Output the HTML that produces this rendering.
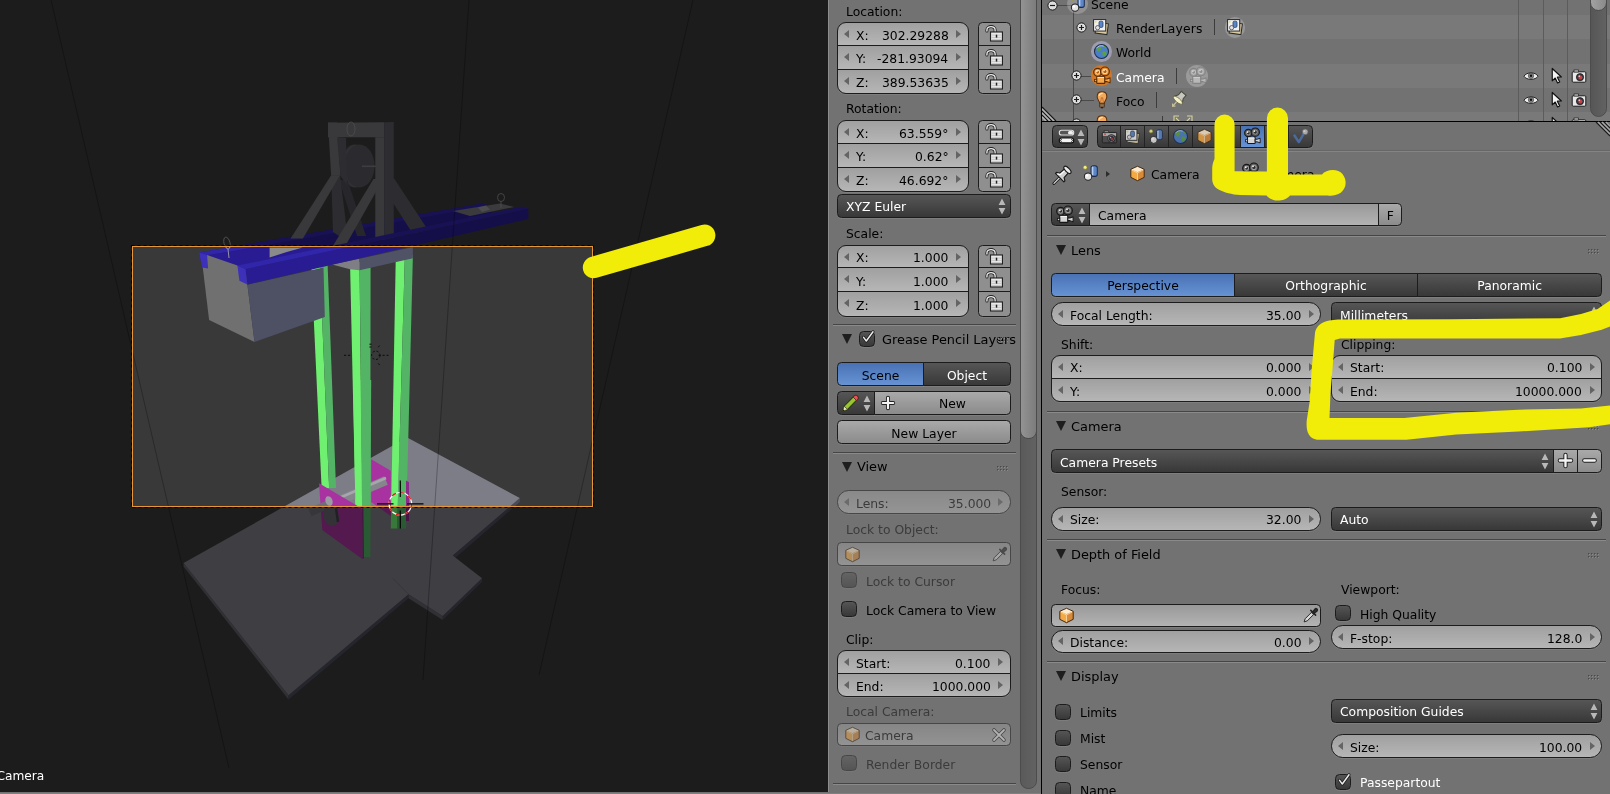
<!DOCTYPE html>
<html lang="en"><head><meta charset="utf-8"><title>Blender</title>
<style>
*{box-sizing:border-box;margin:0;padding:0}
html,body{width:1610px;height:794px;overflow:hidden;background:#727272}
body{position:relative;font-family:"DejaVu Sans","Liberation Sans",sans-serif;font-size:12.35px;color:#000;line-height:1}
.abs{position:absolute}
.t{will-change:transform;position:absolute;white-space:nowrap;line-height:14px;height:14px}
.h{font-size:12.9px}
.w{position:absolute;border:1px solid #1c1c1c;box-shadow:0 1px 0 rgba(255,255,255,.09)}
.num{background:linear-gradient(#a0a0a0,#b6b6b6)}
.tool{background:linear-gradient(#a9a9a9,#8b8b8b)}
.txt{background:linear-gradient(#999,#b3b3b3)}
.dk{background:linear-gradient(#565656,#383838);color:#fff}
.sel{background:linear-gradient(#4872b4,#6792d3);color:#000}
.tog{background:#8f8f8f}
.dis{opacity:.5}
.cb{position:absolute;width:16px;height:16px;border:1px solid #1c1c1c;border-radius:4.5px;background:linear-gradient(#555,#383838);box-shadow:0 1px 0 rgba(255,255,255,.08)}
.al{position:absolute;width:0;height:0;border-top:4px solid transparent;border-bottom:4px solid transparent;border-right:5px solid #646464}
.ar{position:absolute;width:0;height:0;border-top:4px solid transparent;border-bottom:4px solid transparent;border-left:5px solid #646464}
.sep{position:absolute;height:2px;border-top:1px solid #454545;border-bottom:1px solid #8a8a8a}
.tri{position:absolute;width:0;height:0;border-left:5.5px solid transparent;border-right:5.5px solid transparent;border-top:10px solid #1e1e1e}
.c{text-align:center}
.r{text-align:right}
svg{position:absolute;overflow:visible}
</style></head>
<body>
<div class="abs" style="left:0;top:0;width:828px;height:792px;background:#393939;overflow:hidden">
<svg width="828" height="792" viewBox="0 0 828 792" style="left:0;top:0" shape-rendering="geometricPrecision">
<polygon points="183.6,563.1 288.5,695.3 288.5,699.6 183.6,566.5" fill="#60606a" />
<polygon points="288.5,695.3 408.5,594.3 408.5,598.3 288.5,699.6" fill="#4b4b5c" />
<polygon points="408.5,594.3 442.7,616.1 442.7,620.1 408.5,598.3" fill="#60606a" />
<polygon points="442.7,616.1 482.0,578.3 482.0,582.0 442.7,620.1" fill="#4b4b5c" />
<polygon points="452.7,555.6 519.8,498.1 519.8,502.0 455.0,558.0" fill="#4b4b5c" />
<polygon points="407.2,437.4 519.8,498.1 452.7,555.6 482.0,578.3 442.7,616.1 408.5,594.3 288.5,695.3 183.6,563.1" fill="#7d7d87" />
<path d="M392.8 578.3 L408.5 594.3" stroke="#6a6a74" stroke-width="1" fill="none"/>
<polygon points="311.1,262.0 319.8,262.0 329.1,488.0 321.6,488.0" fill="#70f070" />
<polygon points="319.8,262.0 327.5,262.0 336.0,488.0 329.1,488.0" fill="#54b466" />
<polygon points="350.0,262.0 359.5,262.0 362.2,512.0 355.6,512.0" fill="#70f070" />
<polygon points="359.5,262.0 370.6,262.0 370.2,557.0 363.0,557.0" fill="#54b466" />
<polygon points="395.8,255.0 404.9,255.0 397.1,528.6 390.8,528.6" fill="#70f070" />
<polygon points="404.9,255.0 412.9,255.0 406.0,528.6 397.1,528.6" fill="#54b466" />
<polygon points="371.2,459.3 390.8,470.7 390.8,516.0 371.2,502.0" fill="#a8329f" />
<polygon points="406.0,480.5 409.0,482.3 409.0,521.0 406.0,521.0" fill="#8c2a8a" />
<path d="M338 501 L386 480.5" stroke="#85858c" stroke-width="9" stroke-linecap="butt"/>
<path d="M338 498.5 L386 478" stroke="#a6a6ac" stroke-width="2.5"/>
<polygon points="353.0,380.0 360.6,380.0 362.2,512.0 355.6,512.0" fill="#70f070" />
<polygon points="360.6,380.0 371.2,380.0 370.2,557.0 362.6,557.0" fill="#54b466" />
<polygon points="319.0,483.3 361.9,508.5 362.6,559.3 322.3,529.9" fill="#a8329f" />
<polygon points="361.9,508.5 363.4,508.0 364.0,558.0 362.6,559.3" fill="#8c2a8a" />
<path d="M310 512.5 L330 503.5" stroke="#6f6f77" stroke-width="8"/>
<ellipse cx="331" cy="516" rx="7.5" ry="10" fill="#66666e" transform="rotate(-20 331 516)"/>
<ellipse cx="329" cy="501" rx="3.5" ry="5" fill="#9b9ba3" transform="rotate(-20 329 501)"/>
<path d="M336 508 L338 522" stroke="#40404a" stroke-width="2.5"/>
<polygon points="332.0,264.5 359.5,258.8 359.5,270.3 350.0,269.3" fill="#7e7e84" />
<polygon points="359.5,258.8 412.9,247.0 412.9,258.2 359.5,270.3" fill="#505266" />
<polygon points="199.1,252.5 482.0,203.5 492.0,206.0 492.0,216.0 208.1,268.6 202.1,267.6" fill="#291c92" />
<polygon points="199.1,252.5 482.0,203.5 490.0,205.5 207.1,255.5" fill="#3125aa" />
<polygon points="207.1,254.9 237.4,265.6 245.4,269.4 345.0,248.5 345.0,236.0" fill="#291c92" />
<polygon points="453.0,211.0 500.0,203.5 514.0,207.0 470.0,216.0" fill="#77777c" />
<polygon points="478.0,207.5 486.0,205.5 490.0,209.5 482.0,212.0" fill="#9a9aa0" />
<polygon points="269.6,247.4 302.8,247.4 286.7,252.0 269.6,257.5" fill="#8a8a8a" />
<polygon points="202.1,262.0 207.1,254.9 237.4,265.6 247.4,284.7 254.5,342.1 209.1,320.0" fill="#707070" />
<polygon points="247.4,284.7 323.5,267.6 324.8,317.0 254.5,342.1" fill="#4e5064" />
<polygon points="199.1,252.5 207.1,254.9 208.1,268.6 202.1,267.6" fill="#3d31ba" />
<ellipse cx="353.5" cy="166" rx="13" ry="21.5" fill="#4a4a52"/>
<ellipse cx="355.5" cy="166" rx="13.5" ry="21.5" fill="#62626a"/>
<ellipse cx="359.5" cy="166" rx="15" ry="21.5" fill="#55555e"/>
<path d="M362 166.3 H376" stroke="#7c7c84" stroke-width="1.6"/>
<polygon points="339.0,180.0 347.5,180.0 366.0,236.0 357.0,236.0" fill="#4c4c56" />
<polygon points="393.8,178.0 428.0,230.0 413.0,234.0 386.0,192.0" fill="#585862" />
<polygon points="328.0,122.5 337.0,122.5 340.5,176.0 331.2,176.0" fill="#727277" />
<polygon points="331.2,175.0 340.0,175.0 347.0,232.0 339.0,236.0 333.0,232.0" fill="#585862" />
<polygon points="337.0,137.3 346.0,138.0 347.0,185.0 340.5,176.0" fill="#585862" />
<polygon points="328.0,122.7 384.2,122.2 384.2,137.3 328.0,137.3" fill="#727277" />
<polygon points="375.3,137.3 384.2,137.3 384.2,240.0 375.3,240.0" fill="#727277" />
<polygon points="384.2,122.2 393.8,122.0 393.8,240.0 384.2,240.0" fill="#585862" />
<polygon points="331.2,175.3 340.0,175.3 302.9,238.5 290.6,238.5" fill="#727277" />
<polygon points="373.5,179.1 383.2,179.1 345.3,246.0 332.9,246.0" fill="#727277" />
<ellipse cx="351" cy="129" rx="4" ry="7" fill="none" stroke="#9a9aa2" stroke-width="0.8"/>
<polygon points="237.4,265.6 522.0,206.5 528.4,208.8 245.4,269.2" fill="#3125aa" />
<polygon points="245.4,269.2 528.4,208.8 528.4,219.0 247.4,284.5" fill="#291c92" />
<polygon points="237.4,265.6 245.4,269.2 247.4,284.5 239.4,280.7" fill="#3d31ba" />
<ellipse cx="227" cy="243" rx="3" ry="6" fill="none" stroke="#b0b0b0" stroke-width="0.8" transform="rotate(-15 227 243)"/>
<path d="M228 249 L229 258" stroke="#b0b0b0" stroke-width="0.8"/>
<ellipse cx="501" cy="197.5" rx="3.5" ry="4" fill="none" stroke="#9a9aa2" stroke-width="0.8"/>
<path d="M501 201.5 V208" stroke="#9a9aa2" stroke-width="0.8"/>
<path fill-rule="evenodd" fill="#000" fill-opacity="0.5" d="M0 0H828V792H0Z M132 246H593V507H132Z"/>
<g opacity="0.28" stroke="#000" stroke-width="1" fill="none">
<path d="M51 0 L229 768"/><path d="M469 0 L423 680"/><path d="M693 0 L539 675"/>
</g>
<rect x="131.5" y="245.5" width="462" height="262" fill="none" stroke="#000" stroke-width="1" stroke-dasharray="3 3"/>
<rect x="132.5" y="246.5" width="460" height="260" fill="none" stroke="#e8963a" stroke-width="1"/>
<g stroke="#0c0c0c" stroke-width="1" fill="none" stroke-dasharray="2.2 1.8"><path d="M344 355.3 H352 M378.5 355.3 H388.5"/><circle cx="375.8" cy="355.3" r="4.2"/><path d="M378.2 347.2 L380.6 344.6 M378.2 363.4 L380.6 366 M371.5 344.2 H369.4 M371.5 347 H369.4"/></g>
<circle cx="400.3" cy="503.8" r="11.3" fill="none" stroke="#fff" stroke-width="1.2"/>
<circle cx="400.3" cy="503.8" r="11.3" fill="none" stroke="#e01010" stroke-width="1.2" stroke-dasharray="4.4 4.4"/>
<path d="M377 503.8 H393.5 M407 503.8 H423.5 M400.3 480.5 V497 M400.3 510.5 V528.5" stroke="#000" stroke-width="1.2"/>
<text x="-3.5" y="780" fill="#fff" style="will-change:transform" font-size="12.2" font-family="DejaVu Sans, Liberation Sans, sans-serif">Camera</text>
</svg></div>
<div class="abs" style="left:0;top:792px;width:1041px;height:2px;background:linear-gradient(#6c6c6c,#848484)"></div>
<div class="abs" style="left:828px;top:0;width:213px;height:792px;background:#727272;border-left:1px solid #8c8c8c"></div>
<div class="abs" style="left:1020px;top:-8px;width:17px;height:797px;border:1px solid #4c4c4c;border-radius:8px;background:linear-gradient(90deg,#5a5a5a,#626262)"></div>
<div class="abs" style="left:1020px;top:-8px;width:17px;height:447px;border:1px solid #4c4c4c;border-radius:8px;background:linear-gradient(90deg,#939393,#7c7c7c)"></div>
<div class="abs" style="left:1041px;top:0;width:1px;height:794px;background:#000"></div>
<div class="t " style="left:845.9px;top:5px;">Location:</div>
<div class="w num " style="left:836.7px;top:21.9px;width:131.9px;height:23.9px;border-radius:9px 9px 0 0;"><i class="al" style="left:6.6px;top:7.0px"></i><i class="ar" style="right:6.6px;top:7.0px"></i></div><div class="t " style="left:856.2px;top:29px;">X:</div><div class="t r" style="right:661.4px;top:29px;">302.29288</div><div class="w tog" style="left:978.0px;top:21.9px;width:32.6px;height:23.9px;border-radius:4.5px 4.5px 0 0;"><svg width="18" height="18" viewBox="0 0 16 16" style="left:6.0px;top:2.6px;opacity:1"><path d="M1.7 5.4 V4.4 C1.7 0.4 9 0.4 9 4.4 V7" fill="none" stroke="#222" stroke-width="2.7" stroke-linecap="round"/><path d="M1.7 5.4 V4.4 C1.7 0.4 9 0.4 9 4.4 V7" fill="none" stroke="#ececec" stroke-width="1.2" stroke-linecap="round"/><rect x="4.9" y="6.2" width="10.6" height="8" fill="#e9e9e9" stroke="#222" stroke-width="1"/><path d="M5.6 9 H14.8 M5.6 11 H14.8 M5.6 12.8 H14.8" stroke="#bdbdbd" stroke-width=".7"/><rect x="9.6" y="8.6" width="1.3" height="2.6" fill="#222"/></svg></div><div class="w num " style="left:836.7px;top:44.8px;width:131.9px;height:25.0px;border-radius:0;"><i class="al" style="left:6.6px;top:7.0px"></i><i class="ar" style="right:6.6px;top:7.0px"></i></div><div class="t " style="left:856.2px;top:52px;">Y:</div><div class="t r" style="right:661.4px;top:52px;">-281.93094</div><div class="w tog" style="left:978.0px;top:44.8px;width:32.6px;height:25.0px;border-radius:0;"><svg width="18" height="18" viewBox="0 0 16 16" style="left:6.0px;top:3.0px;opacity:1"><path d="M1.7 5.4 V4.4 C1.7 0.4 9 0.4 9 4.4 V7" fill="none" stroke="#222" stroke-width="2.7" stroke-linecap="round"/><path d="M1.7 5.4 V4.4 C1.7 0.4 9 0.4 9 4.4 V7" fill="none" stroke="#ececec" stroke-width="1.2" stroke-linecap="round"/><rect x="4.9" y="6.2" width="10.6" height="8" fill="#e9e9e9" stroke="#222" stroke-width="1"/><path d="M5.6 9 H14.8 M5.6 11 H14.8 M5.6 12.8 H14.8" stroke="#bdbdbd" stroke-width=".7"/><rect x="9.6" y="8.6" width="1.3" height="2.6" fill="#222"/></svg></div><div class="w num " style="left:836.7px;top:68.8px;width:131.9px;height:25.2px;border-radius:0 0 9px 9px;"><i class="al" style="left:6.6px;top:7.0px"></i><i class="ar" style="right:6.6px;top:7.0px"></i></div><div class="t " style="left:856.2px;top:76px;">Z:</div><div class="t r" style="right:661.4px;top:76px;">389.53635</div><div class="w tog" style="left:978.0px;top:68.8px;width:32.6px;height:25.2px;border-radius:0 0 4.5px 4.5px;"><svg width="18" height="18" viewBox="0 0 16 16" style="left:6.0px;top:3.0px;opacity:1"><path d="M1.7 5.4 V4.4 C1.7 0.4 9 0.4 9 4.4 V7" fill="none" stroke="#222" stroke-width="2.7" stroke-linecap="round"/><path d="M1.7 5.4 V4.4 C1.7 0.4 9 0.4 9 4.4 V7" fill="none" stroke="#ececec" stroke-width="1.2" stroke-linecap="round"/><rect x="4.9" y="6.2" width="10.6" height="8" fill="#e9e9e9" stroke="#222" stroke-width="1"/><path d="M5.6 9 H14.8 M5.6 11 H14.8 M5.6 12.8 H14.8" stroke="#bdbdbd" stroke-width=".7"/><rect x="9.6" y="8.6" width="1.3" height="2.6" fill="#222"/></svg></div>
<div class="t " style="left:845.9px;top:102px;">Rotation:</div>
<div class="w num " style="left:836.7px;top:119.9px;width:131.9px;height:23.9px;border-radius:9px 9px 0 0;"><i class="al" style="left:6.6px;top:7.0px"></i><i class="ar" style="right:6.6px;top:7.0px"></i></div><div class="t " style="left:856.2px;top:127px;">X:</div><div class="t r" style="right:661.4px;top:127px;">63.559°</div><div class="w tog" style="left:978.0px;top:119.9px;width:32.6px;height:23.9px;border-radius:4.5px 4.5px 0 0;"><svg width="18" height="18" viewBox="0 0 16 16" style="left:6.0px;top:2.6px;opacity:1"><path d="M1.7 5.4 V4.4 C1.7 0.4 9 0.4 9 4.4 V7" fill="none" stroke="#222" stroke-width="2.7" stroke-linecap="round"/><path d="M1.7 5.4 V4.4 C1.7 0.4 9 0.4 9 4.4 V7" fill="none" stroke="#ececec" stroke-width="1.2" stroke-linecap="round"/><rect x="4.9" y="6.2" width="10.6" height="8" fill="#e9e9e9" stroke="#222" stroke-width="1"/><path d="M5.6 9 H14.8 M5.6 11 H14.8 M5.6 12.8 H14.8" stroke="#bdbdbd" stroke-width=".7"/><rect x="9.6" y="8.6" width="1.3" height="2.6" fill="#222"/></svg></div><div class="w num " style="left:836.7px;top:142.8px;width:131.9px;height:25.0px;border-radius:0;"><i class="al" style="left:6.6px;top:7.0px"></i><i class="ar" style="right:6.6px;top:7.0px"></i></div><div class="t " style="left:856.2px;top:150px;">Y:</div><div class="t r" style="right:661.4px;top:150px;">0.62°</div><div class="w tog" style="left:978.0px;top:142.8px;width:32.6px;height:25.0px;border-radius:0;"><svg width="18" height="18" viewBox="0 0 16 16" style="left:6.0px;top:3.0px;opacity:1"><path d="M1.7 5.4 V4.4 C1.7 0.4 9 0.4 9 4.4 V7" fill="none" stroke="#222" stroke-width="2.7" stroke-linecap="round"/><path d="M1.7 5.4 V4.4 C1.7 0.4 9 0.4 9 4.4 V7" fill="none" stroke="#ececec" stroke-width="1.2" stroke-linecap="round"/><rect x="4.9" y="6.2" width="10.6" height="8" fill="#e9e9e9" stroke="#222" stroke-width="1"/><path d="M5.6 9 H14.8 M5.6 11 H14.8 M5.6 12.8 H14.8" stroke="#bdbdbd" stroke-width=".7"/><rect x="9.6" y="8.6" width="1.3" height="2.6" fill="#222"/></svg></div><div class="w num " style="left:836.7px;top:166.8px;width:131.9px;height:25.2px;border-radius:0 0 9px 9px;"><i class="al" style="left:6.6px;top:7.0px"></i><i class="ar" style="right:6.6px;top:7.0px"></i></div><div class="t " style="left:856.2px;top:174px;">Z:</div><div class="t r" style="right:661.4px;top:174px;">46.692°</div><div class="w tog" style="left:978.0px;top:166.8px;width:32.6px;height:25.2px;border-radius:0 0 4.5px 4.5px;"><svg width="18" height="18" viewBox="0 0 16 16" style="left:6.0px;top:3.0px;opacity:1"><path d="M1.7 5.4 V4.4 C1.7 0.4 9 0.4 9 4.4 V7" fill="none" stroke="#222" stroke-width="2.7" stroke-linecap="round"/><path d="M1.7 5.4 V4.4 C1.7 0.4 9 0.4 9 4.4 V7" fill="none" stroke="#ececec" stroke-width="1.2" stroke-linecap="round"/><rect x="4.9" y="6.2" width="10.6" height="8" fill="#e9e9e9" stroke="#222" stroke-width="1"/><path d="M5.6 9 H14.8 M5.6 11 H14.8 M5.6 12.8 H14.8" stroke="#bdbdbd" stroke-width=".7"/><rect x="9.6" y="8.6" width="1.3" height="2.6" fill="#222"/></svg></div>
<div class="w dk" style="left:836.7px;top:194.1px;width:174.0px;height:23.6px;border-radius:4.5px;"><svg width="8" height="17" viewBox="0 0 8 17" style="left:160.0px;top:3.0px"><path d="M4 0.6 L7.4 7 H0.6 Z M4 16.4 L7.4 10 H0.6 Z" fill="#b8b8b8"/></svg></div><div class="t " style="left:846.2px;top:200px;color:#fff;">XYZ Euler</div>
<div class="t " style="left:845.9px;top:227px;">Scale:</div>
<div class="w num " style="left:836.7px;top:244.5px;width:131.9px;height:23.9px;border-radius:9px 9px 0 0;"><i class="al" style="left:6.6px;top:7.0px"></i><i class="ar" style="right:6.6px;top:7.0px"></i></div><div class="t " style="left:856.2px;top:251px;">X:</div><div class="t r" style="right:661.4px;top:251px;">1.000</div><div class="w tog" style="left:978.0px;top:244.5px;width:32.6px;height:23.9px;border-radius:4.5px 4.5px 0 0;"><svg width="18" height="18" viewBox="0 0 16 16" style="left:6.0px;top:2.6px;opacity:1"><path d="M1.7 5.4 V4.4 C1.7 0.4 9 0.4 9 4.4 V7" fill="none" stroke="#222" stroke-width="2.7" stroke-linecap="round"/><path d="M1.7 5.4 V4.4 C1.7 0.4 9 0.4 9 4.4 V7" fill="none" stroke="#ececec" stroke-width="1.2" stroke-linecap="round"/><rect x="4.9" y="6.2" width="10.6" height="8" fill="#e9e9e9" stroke="#222" stroke-width="1"/><path d="M5.6 9 H14.8 M5.6 11 H14.8 M5.6 12.8 H14.8" stroke="#bdbdbd" stroke-width=".7"/><rect x="9.6" y="8.6" width="1.3" height="2.6" fill="#222"/></svg></div><div class="w num " style="left:836.7px;top:267.4px;width:131.9px;height:25.0px;border-radius:0;"><i class="al" style="left:6.6px;top:7.0px"></i><i class="ar" style="right:6.6px;top:7.0px"></i></div><div class="t " style="left:856.2px;top:275px;">Y:</div><div class="t r" style="right:661.4px;top:275px;">1.000</div><div class="w tog" style="left:978.0px;top:267.4px;width:32.6px;height:25.0px;border-radius:0;"><svg width="18" height="18" viewBox="0 0 16 16" style="left:6.0px;top:3.0px;opacity:1"><path d="M1.7 5.4 V4.4 C1.7 0.4 9 0.4 9 4.4 V7" fill="none" stroke="#222" stroke-width="2.7" stroke-linecap="round"/><path d="M1.7 5.4 V4.4 C1.7 0.4 9 0.4 9 4.4 V7" fill="none" stroke="#ececec" stroke-width="1.2" stroke-linecap="round"/><rect x="4.9" y="6.2" width="10.6" height="8" fill="#e9e9e9" stroke="#222" stroke-width="1"/><path d="M5.6 9 H14.8 M5.6 11 H14.8 M5.6 12.8 H14.8" stroke="#bdbdbd" stroke-width=".7"/><rect x="9.6" y="8.6" width="1.3" height="2.6" fill="#222"/></svg></div><div class="w num " style="left:836.7px;top:291.4px;width:131.9px;height:25.2px;border-radius:0 0 9px 9px;"><i class="al" style="left:6.6px;top:7.0px"></i><i class="ar" style="right:6.6px;top:7.0px"></i></div><div class="t " style="left:856.2px;top:299px;">Z:</div><div class="t r" style="right:661.4px;top:299px;">1.000</div><div class="w tog" style="left:978.0px;top:291.4px;width:32.6px;height:25.2px;border-radius:0 0 4.5px 4.5px;"><svg width="18" height="18" viewBox="0 0 16 16" style="left:6.0px;top:3.0px;opacity:1"><path d="M1.7 5.4 V4.4 C1.7 0.4 9 0.4 9 4.4 V7" fill="none" stroke="#222" stroke-width="2.7" stroke-linecap="round"/><path d="M1.7 5.4 V4.4 C1.7 0.4 9 0.4 9 4.4 V7" fill="none" stroke="#ececec" stroke-width="1.2" stroke-linecap="round"/><rect x="4.9" y="6.2" width="10.6" height="8" fill="#e9e9e9" stroke="#222" stroke-width="1"/><path d="M5.6 9 H14.8 M5.6 11 H14.8 M5.6 12.8 H14.8" stroke="#bdbdbd" stroke-width=".7"/><rect x="9.6" y="8.6" width="1.3" height="2.6" fill="#222"/></svg></div>
<div class="sep" style="left:832.5px;top:324.0px;width:183.0px"></div>
<i class="tri" style="left:841.5px;top:334.0px"></i>
<div class="cb " style="left:858.5px;top:331.0px"><svg width="18" height="18" viewBox="0 0 18 18" style="left:-1px;top:-4px"><path d="M4.6 9.4 L7.3 13 L14 3.8" fill="none" stroke="#1a1a1a" stroke-width="3" stroke-linecap="round" stroke-linejoin="round"/><path d="M4.6 9.4 L7.3 13 L14 3.8" fill="none" stroke="#ececec" stroke-width="1.5" stroke-linecap="round" stroke-linejoin="round"/></svg></div>
<div class="t h" style="left:881.5px;top:333px;">Grease Pencil Layers</div>
<svg width="12" height="6" viewBox="0 0 12 6" style="left:996.5px;top:337.0px"><rect x="0" y="0" width="1.4" height="1.4" fill="#4a4a4a"/><rect x="1.0" y="1.0" width="1" height="1" fill="#8c8c8c"/><rect x="0" y="3" width="1.4" height="1.4" fill="#4a4a4a"/><rect x="1.0" y="4.0" width="1" height="1" fill="#8c8c8c"/><rect x="3" y="0" width="1.4" height="1.4" fill="#4a4a4a"/><rect x="4.0" y="1.0" width="1" height="1" fill="#8c8c8c"/><rect x="3" y="3" width="1.4" height="1.4" fill="#4a4a4a"/><rect x="4.0" y="4.0" width="1" height="1" fill="#8c8c8c"/><rect x="6" y="0" width="1.4" height="1.4" fill="#4a4a4a"/><rect x="7.0" y="1.0" width="1" height="1" fill="#8c8c8c"/><rect x="6" y="3" width="1.4" height="1.4" fill="#4a4a4a"/><rect x="7.0" y="4.0" width="1" height="1" fill="#8c8c8c"/><rect x="9" y="0" width="1.4" height="1.4" fill="#4a4a4a"/><rect x="10.0" y="1.0" width="1" height="1" fill="#8c8c8c"/><rect x="9" y="3" width="1.4" height="1.4" fill="#4a4a4a"/><rect x="10.0" y="4.0" width="1" height="1" fill="#8c8c8c"/></svg>
<div class="w sel" style="left:836.7px;top:362.3px;width:87.0px;height:23.6px;border-radius:4.5px 0 0 4.5px;"></div><div class="t c" style="left:836.7px;top:369px;width:87.0px;">Scene</div>
<div class="w dk" style="left:922.7px;top:362.3px;width:88.0px;height:23.6px;border-radius:0 4.5px 4.5px 0;"></div><div class="t c" style="left:922.7px;top:369px;width:88.0px;color:#fff;">Object</div>
<div class="w dk" style="left:836.7px;top:391.2px;width:38.0px;height:23.4px;border-radius:4.5px 0 0 4.5px;"><svg width="19" height="19" viewBox="0 0 16 16" style="left:3.0px;top:1.8px;opacity:1"><path d="M1.2 14.8 L2.6 10.2 L11.2 1.6 C12 .8 13 1 13.8 1.8 C14.6 2.6 14.8 3.6 14 4.4 L5.6 13 Z" fill="#9ac431" stroke="#2a3a10" stroke-width=".9" stroke-linejoin="round"/><path d="M10.2 2.6 L13.2 5.6 L14 4.4 C14.8 3.6 14.6 2.6 13.8 1.8 C13 1 12 .8 11.2 1.6 Z" fill="#e8525a" stroke="#5a1a1a" stroke-width=".7"/><path d="M1.2 14.8 L2.6 10.2 L5.6 13 Z" fill="#f0e0b8" stroke="#2a3a10" stroke-width=".6"/><path d="M1.2 14.8 L1.8 12.8 L3 14 Z" fill="#222"/></svg><svg width="8" height="17" viewBox="0 0 8 17" style="left:25.5px;top:3.0px"><path d="M4 0.6 L7.4 7 H0.6 Z M4 16.4 L7.4 10 H0.6 Z" fill="#b8b8b8"/></svg></div>
<div class="w tool" style="left:873.7px;top:391.2px;width:137.0px;height:23.4px;border-radius:0 4.5px 4.5px 0;"><svg width="14" height="14" viewBox="0 0 16 16" style="left:6.5px;top:3.8px;opacity:1"><path d="M8 2 V14 M2 8 H14" stroke="#222" stroke-width="4.6" stroke-linecap="round"/><path d="M8 2 V14 M2 8 H14" stroke="#f4f4f4" stroke-width="2.5" stroke-linecap="round"/></svg></div><div class="t c" style="left:884.2px;top:397px;width:137.0px;">New</div>
<div class="w tool" style="left:836.7px;top:420.1px;width:174.0px;height:23.6px;border-radius:4.5px;"></div><div class="t c" style="left:836.7px;top:427px;width:174.0px;">New Layer</div>
<div class="sep" style="left:832.5px;top:452.3px;width:183.0px"></div>
<i class="tri" style="left:841.5px;top:462.3px"></i>
<div class="t h" style="left:856.9px;top:460px;">View</div>
<svg width="12" height="6" viewBox="0 0 12 6" style="left:996.5px;top:465.5px"><rect x="0" y="0" width="1.4" height="1.4" fill="#4a4a4a"/><rect x="1.0" y="1.0" width="1" height="1" fill="#8c8c8c"/><rect x="0" y="3" width="1.4" height="1.4" fill="#4a4a4a"/><rect x="1.0" y="4.0" width="1" height="1" fill="#8c8c8c"/><rect x="3" y="0" width="1.4" height="1.4" fill="#4a4a4a"/><rect x="4.0" y="1.0" width="1" height="1" fill="#8c8c8c"/><rect x="3" y="3" width="1.4" height="1.4" fill="#4a4a4a"/><rect x="4.0" y="4.0" width="1" height="1" fill="#8c8c8c"/><rect x="6" y="0" width="1.4" height="1.4" fill="#4a4a4a"/><rect x="7.0" y="1.0" width="1" height="1" fill="#8c8c8c"/><rect x="6" y="3" width="1.4" height="1.4" fill="#4a4a4a"/><rect x="7.0" y="4.0" width="1" height="1" fill="#8c8c8c"/><rect x="9" y="0" width="1.4" height="1.4" fill="#4a4a4a"/><rect x="10.0" y="1.0" width="1" height="1" fill="#8c8c8c"/><rect x="9" y="3" width="1.4" height="1.4" fill="#4a4a4a"/><rect x="10.0" y="4.0" width="1" height="1" fill="#8c8c8c"/></svg>
<div class="w num dis" style="left:836.7px;top:490.0px;width:174.0px;height:23.8px;border-radius:11.6px;"><i class="al" style="left:6.6px;top:6.9px"></i><i class="ar" style="right:6.6px;top:6.9px"></i></div><div class="t " style="left:856.2px;top:497px;color:#3b3b3b;">Lens:</div><div class="t r" style="right:619.3px;top:497px;color:#3b3b3b;">35.000</div>
<div class="t " style="left:845.9px;top:523px;color:#3b3b3b">Lock to Object:</div>
<div class="w txt dis" style="left:836.7px;top:542.4px;width:174.0px;height:23.4px;border-radius:4.5px;"><svg width="17" height="17" viewBox="0 0 16 16" style="left:6.0px;top:2.5px;opacity:1"><path d="M8 1.2 L14.3 4 V11.6 L8 14.8 L1.7 11.6 V4 Z" fill="#c98a4a"/><path d="M8 1.2 L14.3 4 L8 6.9 L1.7 4 Z" fill="#fdebd0"/><path d="M1.7 4 L8 6.9 V14.8 L1.7 11.6 Z" fill="#f5a945"/><path d="M8 6.9 L14.3 4 V11.6 L8 14.8 Z" fill="#d98b3a"/><path d="M2.4 4.6 L8 7.4 L13.6 4.6 M8 7.4 V14" fill="none" stroke="#ffe2b8" stroke-width=".7"/><path d="M8 1.2 L14.3 4 V11.6 L8 14.8 L1.7 11.6 V4 Z" fill="none" stroke="#3a2610" stroke-width=".9" stroke-linejoin="round"/></svg><svg width="17" height="17" viewBox="0 0 16 16" style="left:153.0px;top:2.5px;opacity:1"><path d="M2 14 L3 11 L9.2 4.8 L11.2 6.8 L5 13 Z" fill="#d8d8d8" stroke="#222" stroke-width=".9" stroke-linejoin="round"/><path d="M8.3 3.2 L12.8 7.7 M9.6 5.4 L12.4 1.9 C13.4 .9 15.1 2.6 14.1 3.6 L10.6 6.4" fill="#333" stroke="#222" stroke-width="1.5" stroke-linejoin="round" stroke-linecap="round"/></svg></div>
<div class="cb dis" style="left:841.3px;top:572.4px"></div>
<div class="t " style="left:865.6px;top:575px;color:#3b3b3b">Lock to Cursor</div>
<div class="cb " style="left:841.3px;top:601.3px"></div>
<div class="t " style="left:865.6px;top:604px;">Lock Camera to View</div>
<div class="t " style="left:845.9px;top:633px;">Clip:</div>
<div class="w num " style="left:836.7px;top:650.3px;width:174.0px;height:24.1px;border-radius:9px 9px 0 0;"><i class="al" style="left:6.6px;top:7.1px"></i><i class="ar" style="right:6.6px;top:7.1px"></i></div><div class="t " style="left:856.2px;top:657px;">Start:</div><div class="t r" style="right:619.3px;top:657px;">0.100</div>
<div class="w num " style="left:836.7px;top:673.4px;width:174.0px;height:24.0px;border-radius:0 0 9px 9px;"><i class="al" style="left:6.6px;top:7.0px"></i><i class="ar" style="right:6.6px;top:7.0px"></i></div><div class="t " style="left:856.2px;top:680px;">End:</div><div class="t r" style="right:619.3px;top:680px;">1000.000</div>
<div class="t " style="left:845.9px;top:705px;color:#3b3b3b">Local Camera:</div>
<div class="w txt dis" style="left:836.7px;top:722.6px;width:174.0px;height:23.4px;border-radius:4.5px;"><svg width="17" height="17" viewBox="0 0 16 16" style="left:6.0px;top:2.5px;opacity:1"><path d="M8 1.2 L14.3 4 V11.6 L8 14.8 L1.7 11.6 V4 Z" fill="#c98a4a"/><path d="M8 1.2 L14.3 4 L8 6.9 L1.7 4 Z" fill="#fdebd0"/><path d="M1.7 4 L8 6.9 V14.8 L1.7 11.6 Z" fill="#f5a945"/><path d="M8 6.9 L14.3 4 V11.6 L8 14.8 Z" fill="#d98b3a"/><path d="M2.4 4.6 L8 7.4 L13.6 4.6 M8 7.4 V14" fill="none" stroke="#ffe2b8" stroke-width=".7"/><path d="M8 1.2 L14.3 4 V11.6 L8 14.8 L1.7 11.6 V4 Z" fill="none" stroke="#3a2610" stroke-width=".9" stroke-linejoin="round"/></svg><svg width="16" height="16" viewBox="0 0 16 16" style="left:153.0px;top:3.0px;opacity:1"><path d="M3 3 L13 13 M13 3 L3 13" stroke="#222" stroke-width="3.6" stroke-linecap="round"/><path d="M3 3 L13 13 M13 3 L3 13" stroke="#f0f0f0" stroke-width="1.8" stroke-linecap="round"/></svg></div>
<div class="t " style="left:864.7px;top:729px;color:#3b3b3b">Camera</div>
<div class="cb dis" style="left:841.3px;top:754.7px"></div>
<div class="t " style="left:865.6px;top:758px;color:#3b3b3b">Render Border</div>
<div class="sep" style="left:832.5px;top:782.8px;width:183.0px"></div>
<div class="abs" style="left:1042px;top:0;width:568px;height:121px;background:#727272;overflow:hidden">
<div class="abs" style="left:0;top:15.2px;width:568px;height:24.2px;background:#797979"></div>
<div class="abs" style="left:0;top:63.6px;width:568px;height:24.2px;background:#797979"></div>
<div class="abs" style="left:0;top:112.0px;width:568px;height:24.2px;background:#797979"></div>
<div class="abs" style="left:476.2px;top:0;width:1px;height:121px;background:#5c5c5c"></div>
<div class="abs" style="left:500.8px;top:0;width:1px;height:121px;background:#5c5c5c"></div>
<div class="abs" style="left:524.8px;top:0;width:1px;height:121px;background:#5c5c5c"></div>
<div class="abs" style="left:31px;top:6px;width:1px;height:115px;background:#4a4a4a"></div>
<div class="abs" style="left:14px;top:5px;width:18px;height:1px;background:#4a4a4a"></div>
<div class="abs" style="left:38px;top:75.5px;width:14px;height:1px;background:#4a4a4a"></div>
<div class="abs" style="left:38px;top:99.7px;width:14px;height:1px;background:#4a4a4a"></div>
<svg width="11" height="11" viewBox="0 0 11 11" style="left:4.5px;top:-0.5px"><circle cx="5.5" cy="5.5" r="4.6" fill="#dedede" stroke="#1a1a1a" stroke-width="1"/><path d="M3 5.5 H8" stroke="#1a1a1a" stroke-width="1.2"/></svg>
<div class="abs" style="left:25.2px;top:-6.3px;width:20.6px;height:20.6px;border-radius:50%;background:rgba(255,255,255,.22)"></div>
<svg width="18" height="18" viewBox="0 0 16 16" style="left:26.5px;top:-5.5px;opacity:1"><rect x="8" y="1.6" width="5.6" height="9.4" rx="2" fill="#5b86c8" stroke="#1c2c4c" stroke-width=".9"/><path d="M9.4 3 V9.4" stroke="#b8d0f0" stroke-width="1.4" stroke-linecap="round"/><circle cx="5.4" cy="11.2" r="3.3" fill="#e6e6e6" stroke="#222" stroke-width=".9"/><circle cx="4.4" cy="10.2" r="1.2" fill="#fff"/><circle cx="2.8" cy="3" r="1.7" fill="#f4f09a" stroke="#8a8420" stroke-width=".6"/></svg>
<div class="t " style="left:49.3px;top:-2px;">Scene</div>
<svg width="11" height="11" viewBox="0 0 11 11" style="left:34.0px;top:21.5px"><circle cx="5.5" cy="5.5" r="4.6" fill="#dedede" stroke="#1a1a1a" stroke-width="1"/><path d="M3 5.5 H8 M5.5 3 V8" stroke="#1a1a1a" stroke-width="1.2"/></svg>
<svg width="18" height="18" viewBox="0 0 16 16" style="left:50.0px;top:18.0px;opacity:1"><rect x="3.4" y="4.4" width="10.6" height="9.6" fill="#d8c9a0" stroke="#2a2a2a" stroke-width=".9" transform="rotate(8 8 9)"/><rect x="1.4" y="1.4" width="10.8" height="10.2" fill="#f0f0f0" stroke="#2a2a2a" stroke-width=".9"/><rect x="6.2" y="2.8" width="3.6" height="5.6" rx="1.3" fill="#5b86c8" stroke="#1c2c4c" stroke-width=".6"/><circle cx="5" cy="8.6" r="1.9" fill="#e0e0e0" stroke="#333" stroke-width=".6"/><circle cx="3.2" cy="3.4" r="1" fill="#f0e060"/></svg>
<div class="t " style="left:73.6px;top:22px;letter-spacing:.15px">RenderLayers</div>
<div class="abs" style="left:171.5px;top:19px;width:1px;height:16px;background:#3c3c3c"></div>
<div class="abs" style="left:182.9px;top:17.0px;width:20.6px;height:20.6px;border-radius:50%;background:rgba(255,255,255,.22)"></div>
<svg width="18" height="18" viewBox="0 0 16 16" style="left:184.2px;top:18.0px;opacity:1"><rect x="3.4" y="4.4" width="10.6" height="9.6" fill="#d8c9a0" stroke="#2a2a2a" stroke-width=".9" transform="rotate(8 8 9)"/><rect x="1.4" y="1.4" width="10.8" height="10.2" fill="#f0f0f0" stroke="#2a2a2a" stroke-width=".9"/><rect x="6.2" y="2.8" width="3.6" height="5.6" rx="1.3" fill="#5b86c8" stroke="#1c2c4c" stroke-width=".6"/><circle cx="5" cy="8.6" r="1.9" fill="#e0e0e0" stroke="#333" stroke-width=".6"/><circle cx="3.2" cy="3.4" r="1" fill="#f0e060"/></svg>
<div class="abs" style="left:49.2px;top:41.2px;width:20.6px;height:20.6px;border-radius:50%;background:rgba(200,200,235,.5)"></div>
<svg width="17" height="17" viewBox="0 0 16 16" style="left:51.0px;top:43.0px;opacity:1"><circle cx="8" cy="8" r="6.6" fill="#4a7ec8" stroke="#1c2c4c" stroke-width="1"/><path d="M4 4.2 C5.5 3 7.5 3.4 8 4.6 C8.4 5.8 6.8 6.2 6.6 7.4 C6.4 8.6 5 8.6 4 7.6 C3.2 6.8 3 5.2 4 4.2 Z M9 8.4 C10.4 7.6 12.4 8 12.8 9.4 C13 10.8 11.6 12.6 10.4 12.6 C9.2 12.6 8.4 9.6 9 8.4 Z M9.8 2.6 C11 2.8 12.4 3.8 12.8 5 C11.8 5.4 10 4.4 9.8 2.6 Z" fill="#5aa03c"/><path d="M3.2 5 C4.6 2.6 7.8 2 10 3" fill="none" stroke="#cfe0f8" stroke-width=".9" opacity=".8"/></svg>
<div class="t " style="left:73.6px;top:46px;">World</div>
<svg width="11" height="11" viewBox="0 0 11 11" style="left:28.5px;top:70.0px"><circle cx="5.5" cy="5.5" r="4.6" fill="#dedede" stroke="#1a1a1a" stroke-width="1"/><path d="M3 5.5 H8 M5.5 3 V8" stroke="#1a1a1a" stroke-width="1.2"/></svg>
<div class="abs" style="left:49.2px;top:65.4px;width:20.6px;height:20.6px;border-radius:50%;background:#d07828"></div>
<svg width="18" height="18" viewBox="0 0 16 16" style="left:50.5px;top:66.5px;opacity:1"><circle cx="4.1" cy="4.7" r="3.5" fill="#e88a2c" stroke="#5a2c06" stroke-width="1"/><circle cx="4.1" cy="4.7" r="1.75" fill="#b85a0c" stroke="#ffd9a0" stroke-width=".9"/><circle cx="3.40" cy="3.83" r=".8" fill="#ffe0b0"/><circle cx="10.6" cy="3.9" r="3.9" fill="#e88a2c" stroke="#5a2c06" stroke-width="1"/><circle cx="10.6" cy="3.9" r="1.95" fill="#b85a0c" stroke="#ffd9a0" stroke-width=".9"/><circle cx="9.82" cy="2.92" r=".8" fill="#ffe0b0"/><rect x="3.3" y="8.6" width="7.2" height="6" rx=".7" fill="#f6a84a" stroke="#5a2c06" stroke-width="1"/><path d="M3.9 9.3 H9.8" stroke="#ffe0b0" stroke-width="1"/><path d="M10.5 10.6 H12.4 L15.2 9.6 V14 L12.4 13 H10.5 Z" fill="#f6a84a" stroke="#5a2c06" stroke-width=".9" stroke-linejoin="round"/><rect x="1.3" y="11" width="2" height="2" fill="#f6a84a" stroke="#5a2c06" stroke-width=".7"/></svg>
<div class="t " style="left:73.6px;top:71px;color:#fff">Camera</div>
<div class="abs" style="left:133.8px;top:67.5px;width:1px;height:16px;background:#3c3c3c"></div>
<div class="abs" style="left:144.3px;top:64.7px;width:22.0px;height:22.0px;border-radius:50%;background:rgba(255,255,255,.25)"></div>
<svg width="18" height="18" viewBox="0 0 16 16" style="left:146.5px;top:67.0px;opacity:0.75"><circle cx="4.1" cy="4.7" r="3.5" fill="#a2a2a2" stroke="#7c7c7c" stroke-width="1"/><circle cx="4.1" cy="4.7" r="1.75" fill="#8a8a8a" stroke="#cfcfcf" stroke-width=".9"/><circle cx="3.40" cy="3.83" r=".8" fill="#dedede"/><circle cx="10.6" cy="3.9" r="3.9" fill="#a2a2a2" stroke="#7c7c7c" stroke-width="1"/><circle cx="10.6" cy="3.9" r="1.95" fill="#8a8a8a" stroke="#cfcfcf" stroke-width=".9"/><circle cx="9.82" cy="2.92" r=".8" fill="#dedede"/><rect x="3.3" y="8.6" width="7.2" height="6" rx=".7" fill="#c2c2c2" stroke="#7c7c7c" stroke-width="1"/><path d="M3.9 9.3 H9.8" stroke="#dedede" stroke-width="1"/><path d="M10.5 10.6 H12.4 L15.2 9.6 V14 L12.4 13 H10.5 Z" fill="#c2c2c2" stroke="#7c7c7c" stroke-width=".9" stroke-linejoin="round"/><rect x="1.3" y="11" width="2" height="2" fill="#c2c2c2" stroke="#7c7c7c" stroke-width=".7"/></svg>
<svg width="11" height="11" viewBox="0 0 11 11" style="left:28.5px;top:94.2px"><circle cx="5.5" cy="5.5" r="4.6" fill="#dedede" stroke="#1a1a1a" stroke-width="1"/><path d="M3 5.5 H8 M5.5 3 V8" stroke="#1a1a1a" stroke-width="1.2"/></svg>
<svg width="18" height="18" viewBox="0 0 16 16" style="left:50.5px;top:90.5px;opacity:1"><path d="M8 0.7 C5.1 0.7 3.7 2.9 3.7 5.1 C3.7 7.6 5.8 8.8 6 10.9 H10 C10.2 8.8 12.3 7.6 12.3 5.1 C12.3 2.9 10.9 0.7 8 0.7 Z" fill="#f3a95c" stroke="#5a2e0c" stroke-width=".9"/><path d="M5.4 4.2 C5.8 2.8 7.2 2 8.6 2.2" stroke="#ffe6c4" stroke-width="1.1" fill="none"/><path d="M6.8 10 L7.4 6 L8.6 6 L9.2 10" stroke="#b5601c" stroke-width=".7" fill="none"/><rect x="6" y="10.9" width="4" height="3.3" fill="#b8946a" stroke="#3a2410" stroke-width=".7"/><path d="M6.2 12 H9.8 M6.2 13.1 H9.8" stroke="#5a4026" stroke-width=".5"/><path d="M7 14.2 H9 V15.4 H7 Z" fill="#222"/></svg>
<div class="t " style="left:73.6px;top:95px;">Foco</div>
<div class="abs" style="left:113.8px;top:91.7px;width:1px;height:16px;background:#3c3c3c"></div>
<svg width="19" height="19" viewBox="0 0 16 16" style="left:126.5px;top:90.0px;opacity:1"><g transform="rotate(40 8 8)"><path d="M5.4 1.2 H10.6 V5 L12.6 8.6 H3.4 L5.4 5 Z" fill="#c8c8c0" stroke="#4a4a3a" stroke-width=".9"/><ellipse cx="8" cy="8.8" rx="4.8" ry="1.8" fill="#f4f0c8" stroke="#6a6a4a" stroke-width=".7"/><path d="M8 10.6 V15.4 M6.4 13.8 L8 15.6 L9.6 13.8" stroke="#c8c49a" stroke-width="1" fill="none"/></g></svg>
<svg width="11" height="11" viewBox="0 0 11 11" style="left:28.5px;top:118.4px"><circle cx="5.5" cy="5.5" r="4.6" fill="#dedede" stroke="#1a1a1a" stroke-width="1"/><path d="M3 5.5 H8 M5.5 3 V8" stroke="#1a1a1a" stroke-width="1.2"/></svg>
<svg width="18" height="18" viewBox="0 0 16 16" style="left:50.5px;top:114.5px;opacity:1"><path d="M8 0.7 C5.1 0.7 3.7 2.9 3.7 5.1 C3.7 7.6 5.8 8.8 6 10.9 H10 C10.2 8.8 12.3 7.6 12.3 5.1 C12.3 2.9 10.9 0.7 8 0.7 Z" fill="#f3a95c" stroke="#5a2e0c" stroke-width=".9"/><path d="M5.4 4.2 C5.8 2.8 7.2 2 8.6 2.2" stroke="#ffe6c4" stroke-width="1.1" fill="none"/><path d="M6.8 10 L7.4 6 L8.6 6 L9.2 10" stroke="#b5601c" stroke-width=".7" fill="none"/><rect x="6" y="10.9" width="4" height="3.3" fill="#b8946a" stroke="#3a2410" stroke-width=".7"/><path d="M6.2 12 H9.8 M6.2 13.1 H9.8" stroke="#5a4026" stroke-width=".5"/><path d="M7 14.2 H9 V15.4 H7 Z" fill="#222"/></svg>
<div class="abs" style="left:119.5px;top:116px;width:1px;height:6px;background:#3c3c3c"></div>
<svg width="20" height="10" viewBox="0 0 20 10" style="left:131.0px;top:114.5px"><path d="M1 6 V1 H6 M14 1 H19 V6 M3 3 L7 7 M17 3 L13 7" stroke="#d8d49a" stroke-width="1.1" fill="none"/></svg>
<svg width="16" height="16" viewBox="0 0 16 16" style="left:480.5px;top:67.5px;opacity:1"><path d="M1 8.2 C3.4 3.8 12.6 3.8 15 8.2 C12.6 12.4 3.4 12.4 1 8.2 Z" fill="#f0f0f0" stroke="#222" stroke-width="1"/><circle cx="8" cy="7.8" r="2.7" fill="#8a8a8a" stroke="#333" stroke-width=".6"/><circle cx="8" cy="7.8" r="1.2" fill="#111"/></svg>
<svg width="17" height="17" viewBox="0 0 16 16" style="left:505.5px;top:67.1px;opacity:1"><path d="M4 1.4 L4 13 L6.8 10.4 L9 15 L11 14 L8.8 9.6 L12.6 9.4 Z" fill="#f4f4f4" stroke="#111" stroke-width="1.1" stroke-linejoin="round"/></svg>
<svg width="16" height="16" viewBox="0 0 16 16" style="left:528.5px;top:67.5px;opacity:1"><rect x="1.2" y="3.8" width="13.6" height="10.4" rx="1" fill="#e8e8e8" stroke="#1a1a1a" stroke-width="1"/><rect x="3" y="2" width="4.4" height="2" fill="#d0d0d0" stroke="#1a1a1a" stroke-width=".7"/><circle cx="9" cy="9.2" r="3.6" fill="#3a3a48" stroke="#1a1a1a" stroke-width=".8"/><circle cx="9.4" cy="9.4" r="2" fill="#c84040"/><circle cx="8.3" cy="8.2" r=".9" fill="#f4c0c0"/></svg>
<svg width="16" height="16" viewBox="0 0 16 16" style="left:480.5px;top:91.7px;opacity:1"><path d="M1 8.2 C3.4 3.8 12.6 3.8 15 8.2 C12.6 12.4 3.4 12.4 1 8.2 Z" fill="#f0f0f0" stroke="#222" stroke-width="1"/><circle cx="8" cy="7.8" r="2.7" fill="#8a8a8a" stroke="#333" stroke-width=".6"/><circle cx="8" cy="7.8" r="1.2" fill="#111"/></svg>
<svg width="17" height="17" viewBox="0 0 16 16" style="left:505.5px;top:91.3px;opacity:1"><path d="M4 1.4 L4 13 L6.8 10.4 L9 15 L11 14 L8.8 9.6 L12.6 9.4 Z" fill="#f4f4f4" stroke="#111" stroke-width="1.1" stroke-linejoin="round"/></svg>
<svg width="16" height="16" viewBox="0 0 16 16" style="left:528.5px;top:91.7px;opacity:1"><rect x="1.2" y="3.8" width="13.6" height="10.4" rx="1" fill="#e8e8e8" stroke="#1a1a1a" stroke-width="1"/><rect x="3" y="2" width="4.4" height="2" fill="#d0d0d0" stroke="#1a1a1a" stroke-width=".7"/><circle cx="9" cy="9.2" r="3.6" fill="#3a3a48" stroke="#1a1a1a" stroke-width=".8"/><circle cx="9.4" cy="9.4" r="2" fill="#c84040"/><circle cx="8.3" cy="8.2" r=".9" fill="#f4c0c0"/></svg>
<svg width="16" height="16" viewBox="0 0 16 16" style="left:480.5px;top:115.9px;opacity:1"><path d="M1 8.2 C3.4 3.8 12.6 3.8 15 8.2 C12.6 12.4 3.4 12.4 1 8.2 Z" fill="#f0f0f0" stroke="#222" stroke-width="1"/><circle cx="8" cy="7.8" r="2.7" fill="#8a8a8a" stroke="#333" stroke-width=".6"/><circle cx="8" cy="7.8" r="1.2" fill="#111"/></svg>
<svg width="17" height="17" viewBox="0 0 16 16" style="left:505.5px;top:115.5px;opacity:1"><path d="M4 1.4 L4 13 L6.8 10.4 L9 15 L11 14 L8.8 9.6 L12.6 9.4 Z" fill="#f4f4f4" stroke="#111" stroke-width="1.1" stroke-linejoin="round"/></svg>
<svg width="16" height="16" viewBox="0 0 16 16" style="left:528.5px;top:115.9px;opacity:1"><rect x="1.2" y="3.8" width="13.6" height="10.4" rx="1" fill="#e8e8e8" stroke="#1a1a1a" stroke-width="1"/><rect x="3" y="2" width="4.4" height="2" fill="#d0d0d0" stroke="#1a1a1a" stroke-width=".7"/><circle cx="9" cy="9.2" r="3.6" fill="#3a3a48" stroke="#1a1a1a" stroke-width=".8"/><circle cx="9.4" cy="9.4" r="2" fill="#c84040"/><circle cx="8.3" cy="8.2" r=".9" fill="#f4c0c0"/></svg>
<div class="abs" style="left:547.8px;top:-12px;width:17px;height:129px;border:1px solid #4c4c4c;border-radius:8.5px;background:linear-gradient(90deg,#565656,#626262)"></div>
<div class="abs" style="left:547.8px;top:-12px;width:17px;height:23px;border:1px solid #4c4c4c;border-radius:8.5px;background:linear-gradient(90deg,#a2a2a2,#8a8a8a)"></div>
<svg width="14" height="15" viewBox="0 0 14 15" style="left:0;top:106px"><path d="M0 1 L14 15 M0 5 L10 15 M0 9 L6 15" stroke="#1a1a1a" stroke-width="1.2"/><path d="M0 3 L12 15 M0 7 L8 15 M0 11 L4 15" stroke="#b4b4b4" stroke-width="1.4"/></svg>
</div>
<div class="abs" style="left:1041px;top:121px;width:569px;height:1px;background:#000"></div>
<div class="abs" style="left:1042px;top:122px;width:568px;height:30.4px;background:#727272;border-bottom:1px solid #848484;box-shadow:inset 0 -1px 0 #666"></div>
<svg width="15" height="14" viewBox="0 0 15 14" style="left:1595px;top:122px"><path d="M1 0 L15 14 M5 0 L15 10 M9 0 L15 6" stroke="#1a1a1a" stroke-width="1.1"/><path d="M3 0 L15 12 M7 0 L15 8 M11 0 L15 4" stroke="#a8a8a8" stroke-width="1.2"/></svg>
<div class="w dk" style="left:1052.2px;top:124.9px;width:35.7px;height:23.6px;border-radius:4.5px;"><svg width="17" height="17" viewBox="0 0 16 16" style="left:4.4px;top:2.6px;opacity:1"><rect x="1.2" y="2.2" width="13.6" height="4.4" rx="2.2" fill="#555" stroke="#e0e0e0" stroke-width="1"/><rect x="9.4" y="2.9" width="4.8" height="3" rx="1.5" fill="#f0f0f0"/><rect x="1.2" y="9.4" width="13.6" height="4.6" rx="2.3" fill="#f4f4f4" stroke="#111" stroke-width="1.1"/><path d="M3.4 10.6 L2.4 11.7 L3.4 12.8 M12.6 10.6 L13.6 11.7 L12.6 12.8" stroke="#111" stroke-width=".9" fill="none"/></svg><svg width="8" height="17" viewBox="0 0 8 17" style="left:24.3px;top:3.0px"><path d="M4 0.6 L7.4 7 H0.6 Z M4 16.4 L7.4 10 H0.6 Z" fill="#b8b8b8"/></svg></div>
<div class="w dk" style="left:1097.3px;top:124.9px;width:215.4px;height:23.6px;border-radius:4.5px;overflow:hidden"><div class="abs" style="left:0.0px;top:0;width:22.2px;height:100%;"><svg width="17" height="17" viewBox="0 0 16 16" style="left:2.4px;top:2.2px;opacity:0.8"><rect x="1.2" y="4.2" width="13.6" height="9.8" rx="1" fill="#4e4e4e" stroke="#1a1a1a" stroke-width=".9"/><rect x="1.8" y="4.8" width="12.4" height="2.6" fill="#c4c4c4"/><rect x="3" y="2.6" width="4" height="1.8" fill="#a0a0a0" stroke="#1a1a1a" stroke-width=".6"/><rect x="3" y="5.2" width="1.6" height="1.2" fill="#d04040"/><circle cx="9.8" cy="9.8" r="3.6" fill="#8a8a8a" stroke="#1a1a1a" stroke-width=".8"/><circle cx="9.8" cy="9.8" r="2.5" fill="#2a2a3a"/><circle cx="10.4" cy="10.4" r="1.3" fill="#a03a3a"/><circle cx="9" cy="9" r=".7" fill="#c0c0e0"/></svg></div><div class="abs" style="left:22.2px;top:0;width:24.0px;height:100%;border-left:1px solid #222;"><svg width="17" height="17" viewBox="0 0 16 16" style="left:3.0px;top:2.2px;opacity:0.8"><rect x="3.4" y="4.4" width="10.6" height="9.6" fill="#d8c9a0" stroke="#2a2a2a" stroke-width=".9" transform="rotate(8 8 9)"/><rect x="1.4" y="1.4" width="10.8" height="10.2" fill="#f0f0f0" stroke="#2a2a2a" stroke-width=".9"/><rect x="6.2" y="2.8" width="3.6" height="5.6" rx="1.3" fill="#5b86c8" stroke="#1c2c4c" stroke-width=".6"/><circle cx="5" cy="8.6" r="1.9" fill="#e0e0e0" stroke="#333" stroke-width=".6"/><circle cx="3.2" cy="3.4" r="1" fill="#f0e060"/></svg></div><div class="abs" style="left:46.2px;top:0;width:24.0px;height:100%;border-left:1px solid #222;"><svg width="17" height="17" viewBox="0 0 16 16" style="left:3.0px;top:2.2px;opacity:0.8"><rect x="8" y="1.6" width="5.6" height="9.4" rx="2" fill="#5b86c8" stroke="#1c2c4c" stroke-width=".9"/><path d="M9.4 3 V9.4" stroke="#b8d0f0" stroke-width="1.4" stroke-linecap="round"/><circle cx="5.4" cy="11.2" r="3.3" fill="#e6e6e6" stroke="#222" stroke-width=".9"/><circle cx="4.4" cy="10.2" r="1.2" fill="#fff"/><circle cx="2.8" cy="3" r="1.7" fill="#f4f09a" stroke="#8a8420" stroke-width=".6"/></svg></div><div class="abs" style="left:70.2px;top:0;width:24.0px;height:100%;border-left:1px solid #222;"><svg width="17" height="17" viewBox="0 0 16 16" style="left:3.0px;top:2.2px;opacity:0.8"><circle cx="8" cy="8" r="6.6" fill="#4a7ec8" stroke="#1c2c4c" stroke-width="1"/><path d="M4 4.2 C5.5 3 7.5 3.4 8 4.6 C8.4 5.8 6.8 6.2 6.6 7.4 C6.4 8.6 5 8.6 4 7.6 C3.2 6.8 3 5.2 4 4.2 Z M9 8.4 C10.4 7.6 12.4 8 12.8 9.4 C13 10.8 11.6 12.6 10.4 12.6 C9.2 12.6 8.4 9.6 9 8.4 Z M9.8 2.6 C11 2.8 12.4 3.8 12.8 5 C11.8 5.4 10 4.4 9.8 2.6 Z" fill="#5aa03c"/><path d="M3.2 5 C4.6 2.6 7.8 2 10 3" fill="none" stroke="#cfe0f8" stroke-width=".9" opacity=".8"/></svg></div><div class="abs" style="left:94.2px;top:0;width:24.0px;height:100%;border-left:1px solid #222;"><svg width="17" height="17" viewBox="0 0 16 16" style="left:3.0px;top:2.2px;opacity:0.8"><path d="M8 1.2 L14.3 4 V11.6 L8 14.8 L1.7 11.6 V4 Z" fill="#c98a4a"/><path d="M8 1.2 L14.3 4 L8 6.9 L1.7 4 Z" fill="#fdebd0"/><path d="M1.7 4 L8 6.9 V14.8 L1.7 11.6 Z" fill="#f5a945"/><path d="M8 6.9 L14.3 4 V11.6 L8 14.8 Z" fill="#d98b3a"/><path d="M2.4 4.6 L8 7.4 L13.6 4.6 M8 7.4 V14" fill="none" stroke="#ffe2b8" stroke-width=".7"/><path d="M8 1.2 L14.3 4 V11.6 L8 14.8 L1.7 11.6 V4 Z" fill="none" stroke="#3a2610" stroke-width=".9" stroke-linejoin="round"/></svg></div><div class="abs" style="left:118.2px;top:0;width:24.0px;height:100%;border-left:1px solid #222;"></div><div class="abs" style="left:142.2px;top:0;width:24.0px;height:100%;border-left:1px solid #222;background:linear-gradient(#4872b4,#6792d3);"><svg width="17" height="17" viewBox="0 0 16 16" style="left:3.0px;top:2.2px;opacity:1"><circle cx="4.1" cy="4.7" r="3.5" fill="#5a5a5a" stroke="#161616" stroke-width="1"/><circle cx="4.1" cy="4.7" r="1.75" fill="#2e2e2e" stroke="#a0a0a0" stroke-width=".9"/><circle cx="3.40" cy="3.83" r=".8" fill="#f4f4f4"/><circle cx="10.6" cy="3.9" r="3.9" fill="#5a5a5a" stroke="#161616" stroke-width="1"/><circle cx="10.6" cy="3.9" r="1.95" fill="#2e2e2e" stroke="#a0a0a0" stroke-width=".9"/><circle cx="9.82" cy="2.92" r=".8" fill="#f4f4f4"/><rect x="3.3" y="8.6" width="7.2" height="6" rx=".7" fill="#d6d6d6" stroke="#161616" stroke-width="1"/><path d="M3.9 9.3 H9.8" stroke="#f4f4f4" stroke-width="1"/><path d="M10.5 10.6 H12.4 L15.2 9.6 V14 L12.4 13 H10.5 Z" fill="#d6d6d6" stroke="#161616" stroke-width=".9" stroke-linejoin="round"/><rect x="1.3" y="11" width="2" height="2" fill="#d6d6d6" stroke="#161616" stroke-width=".7"/></svg></div><div class="abs" style="left:166.2px;top:0;width:24.0px;height:100%;border-left:1px solid #222;"></div><div class="abs" style="left:190.2px;top:0;width:24.0px;height:100%;border-left:1px solid #222;"><svg width="17" height="17" viewBox="0 0 16 16" style="left:3.0px;top:2.2px;opacity:0.8"><path d="M1.8 6.4 L6.4 13.2 L11.8 4.2" fill="none" stroke="#4f74b4" stroke-width="2.3" stroke-linejoin="round"/><circle cx="12.4" cy="3.6" r="2.7" fill="#c4c4c4" stroke="#666" stroke-width=".7"/><circle cx="11.7" cy="2.9" r=".9" fill="#f0f0f0"/></svg></div></div>
<svg width="19" height="19" viewBox="0 0 16 16" style="left:1053.2px;top:163.6px;opacity:1"><g transform="translate(8.9 8.2) rotate(45)"><path d="M0 3 L0 11.6" stroke="#1a1a1a" stroke-width="2.4" stroke-linecap="round"/><path d="M0 3 L0 11.4" stroke="#dcdcdc" stroke-width="1" stroke-linecap="round"/><path d="M-2.3 -4 L2.3 -4 L2.6 2 L5 3.4 L5 4.6 L-5 4.6 L-5 3.4 L-2.6 2 Z" fill="#d0d0d0" stroke="#1a1a1a" stroke-width="1" stroke-linejoin="round"/><path d="M-1.2 -3.4 L-1.4 2.4 L-3.6 3.8" stroke="#ffffff" stroke-width="1.1" fill="none"/><ellipse cx="0" cy="-4.6" rx="3.9" ry="1.7" fill="#ececec" stroke="#1a1a1a" stroke-width="1"/></g></svg>
<svg width="18" height="18" viewBox="0 0 16 16" style="left:1081.5px;top:163.5px;opacity:1"><rect x="8" y="1.6" width="5.6" height="9.4" rx="2" fill="#5b86c8" stroke="#1c2c4c" stroke-width=".9"/><path d="M9.4 3 V9.4" stroke="#b8d0f0" stroke-width="1.4" stroke-linecap="round"/><circle cx="5.4" cy="11.2" r="3.3" fill="#e6e6e6" stroke="#222" stroke-width=".9"/><circle cx="4.4" cy="10.2" r="1.2" fill="#fff"/><circle cx="2.8" cy="3" r="1.7" fill="#f4f09a" stroke="#8a8420" stroke-width=".6"/></svg>
<i class="abs" style="left:1105.5px;top:170.5px;width:0;height:0;border-top:3.5px solid transparent;border-bottom:3.5px solid transparent;border-left:4px solid #2c2c2c"></i>
<svg width="17" height="17" viewBox="0 0 16 16" style="left:1128.5px;top:164.5px;opacity:1"><path d="M8 1.2 L14.3 4 V11.6 L8 14.8 L1.7 11.6 V4 Z" fill="#c98a4a"/><path d="M8 1.2 L14.3 4 L8 6.9 L1.7 4 Z" fill="#fdebd0"/><path d="M1.7 4 L8 6.9 V14.8 L1.7 11.6 Z" fill="#f5a945"/><path d="M8 6.9 L14.3 4 V11.6 L8 14.8 Z" fill="#d98b3a"/><path d="M2.4 4.6 L8 7.4 L13.6 4.6 M8 7.4 V14" fill="none" stroke="#ffe2b8" stroke-width=".7"/><path d="M8 1.2 L14.3 4 V11.6 L8 14.8 L1.7 11.6 V4 Z" fill="none" stroke="#3a2610" stroke-width=".9" stroke-linejoin="round"/></svg>
<div class="t " style="left:1151.4px;top:168px;">Camera</div>
<i class="abs" style="left:1216.5px;top:170.5px;width:0;height:0;border-top:3.5px solid transparent;border-bottom:3.5px solid transparent;border-left:4px solid #2c2c2c"></i>
<svg width="18" height="18" viewBox="0 0 16 16" style="left:1242.0px;top:163.0px;opacity:1"><circle cx="4.1" cy="4.7" r="3.5" fill="#5a5a5a" stroke="#161616" stroke-width="1"/><circle cx="4.1" cy="4.7" r="1.75" fill="#2e2e2e" stroke="#a0a0a0" stroke-width=".9"/><circle cx="3.40" cy="3.83" r=".8" fill="#f4f4f4"/><circle cx="10.6" cy="3.9" r="3.9" fill="#5a5a5a" stroke="#161616" stroke-width="1"/><circle cx="10.6" cy="3.9" r="1.95" fill="#2e2e2e" stroke="#a0a0a0" stroke-width=".9"/><circle cx="9.82" cy="2.92" r=".8" fill="#f4f4f4"/><rect x="3.3" y="8.6" width="7.2" height="6" rx=".7" fill="#d6d6d6" stroke="#161616" stroke-width="1"/><path d="M3.9 9.3 H9.8" stroke="#f4f4f4" stroke-width="1"/><path d="M10.5 10.6 H12.4 L15.2 9.6 V14 L12.4 13 H10.5 Z" fill="#d6d6d6" stroke="#161616" stroke-width=".9" stroke-linejoin="round"/><rect x="1.3" y="11" width="2" height="2" fill="#d6d6d6" stroke="#161616" stroke-width=".7"/></svg>
<div class="t " style="left:1266.0px;top:168px;">Camera</div>
<div class="w dk" style="left:1051.0px;top:203.4px;width:39.0px;height:23.0px;border-radius:4.5px 0 0 4.5px;"><svg width="18" height="18" viewBox="0 0 16 16" style="left:3.6px;top:1.4px;opacity:1"><circle cx="4.1" cy="4.7" r="3.5" fill="#5a5a5a" stroke="#161616" stroke-width="1"/><circle cx="4.1" cy="4.7" r="1.75" fill="#2e2e2e" stroke="#a0a0a0" stroke-width=".9"/><circle cx="3.40" cy="3.83" r=".8" fill="#f4f4f4"/><circle cx="10.6" cy="3.9" r="3.9" fill="#5a5a5a" stroke="#161616" stroke-width="1"/><circle cx="10.6" cy="3.9" r="1.95" fill="#2e2e2e" stroke="#a0a0a0" stroke-width=".9"/><circle cx="9.82" cy="2.92" r=".8" fill="#f4f4f4"/><rect x="3.3" y="8.6" width="7.2" height="6" rx=".7" fill="#d6d6d6" stroke="#161616" stroke-width="1"/><path d="M3.9 9.3 H9.8" stroke="#f4f4f4" stroke-width="1"/><path d="M10.5 10.6 H12.4 L15.2 9.6 V14 L12.4 13 H10.5 Z" fill="#d6d6d6" stroke="#161616" stroke-width=".9" stroke-linejoin="round"/><rect x="1.3" y="11" width="2" height="2" fill="#d6d6d6" stroke="#161616" stroke-width=".7"/></svg><svg width="8" height="17" viewBox="0 0 8 17" style="left:26.0px;top:3.0px"><path d="M4 0.6 L7.4 7 H0.6 Z M4 16.4 L7.4 10 H0.6 Z" fill="#b8b8b8"/></svg></div>
<div class="w txt" style="left:1089.0px;top:203.4px;width:290.0px;height:23.0px;border-radius:0;"></div><div class="t " style="left:1097.5px;top:209px;">Camera</div>
<div class="w tool" style="left:1378.0px;top:203.4px;width:24.4px;height:23.0px;border-radius:0 4.5px 4.5px 0;"></div><div class="t c" style="left:1378.0px;top:209px;width:24.4px;">F</div>
<div class="sep" style="left:1047.0px;top:234.8px;width:559.0px"></div>
<i class="tri" style="left:1055.6px;top:245.0px"></i><div class="t h" style="left:1071.4px;top:244px;">Lens</div><svg width="12" height="6" viewBox="0 0 12 6" style="left:1587.5px;top:249.2px"><rect x="0" y="0" width="1.4" height="1.4" fill="#4a4a4a"/><rect x="1.0" y="1.0" width="1" height="1" fill="#8c8c8c"/><rect x="0" y="3" width="1.4" height="1.4" fill="#4a4a4a"/><rect x="1.0" y="4.0" width="1" height="1" fill="#8c8c8c"/><rect x="3" y="0" width="1.4" height="1.4" fill="#4a4a4a"/><rect x="4.0" y="1.0" width="1" height="1" fill="#8c8c8c"/><rect x="3" y="3" width="1.4" height="1.4" fill="#4a4a4a"/><rect x="4.0" y="4.0" width="1" height="1" fill="#8c8c8c"/><rect x="6" y="0" width="1.4" height="1.4" fill="#4a4a4a"/><rect x="7.0" y="1.0" width="1" height="1" fill="#8c8c8c"/><rect x="6" y="3" width="1.4" height="1.4" fill="#4a4a4a"/><rect x="7.0" y="4.0" width="1" height="1" fill="#8c8c8c"/><rect x="9" y="0" width="1.4" height="1.4" fill="#4a4a4a"/><rect x="10.0" y="1.0" width="1" height="1" fill="#8c8c8c"/><rect x="9" y="3" width="1.4" height="1.4" fill="#4a4a4a"/><rect x="10.0" y="4.0" width="1" height="1" fill="#8c8c8c"/></svg>
<div class="w sel" style="left:1050.9px;top:273.1px;width:184.0px;height:23.6px;border-radius:4.5px 0 0 4.5px;"></div><div class="t c" style="left:1050.9px;top:279px;width:184.0px;">Perspective</div>
<div class="w dk" style="left:1233.9px;top:273.1px;width:184.0px;height:23.6px;border-radius:0;"></div><div class="t c" style="left:1233.9px;top:279px;width:184.0px;color:#fff;">Orthographic</div>
<div class="w dk" style="left:1416.9px;top:273.1px;width:185.3px;height:23.6px;border-radius:0 4.5px 4.5px 0;"></div><div class="t c" style="left:1416.9px;top:279px;width:185.3px;color:#fff;">Panoramic</div>
<div class="w num " style="left:1050.9px;top:302.0px;width:270.4px;height:23.5px;border-radius:11.7px;"><i class="al" style="left:6.6px;top:6.8px"></i><i class="ar" style="right:6.6px;top:6.8px"></i></div><div class="t " style="left:1070.4px;top:309px;">Focal Length:</div><div class="t r" style="right:308.7px;top:309px;">35.00</div>
<div class="w dk" style="left:1330.8px;top:302.0px;width:271.4px;height:23.5px;border-radius:4.5px;"><svg width="8" height="17" viewBox="0 0 8 17" style="left:258.0px;top:3.0px"><path d="M4 0.6 L7.4 7 H0.6 Z M4 16.4 L7.4 10 H0.6 Z" fill="#b8b8b8"/></svg></div><div class="t " style="left:1340.3px;top:309px;color:#fff;">Millimeters</div>
<div class="t " style="left:1060.6px;top:338px;">Shift:</div>
<div class="t " style="left:1340.5px;top:338px;">Clipping:</div>
<div class="w num " style="left:1050.9px;top:355.3px;width:270.4px;height:24.0px;border-radius:9px 9px 0 0;"><i class="al" style="left:6.6px;top:7.0px"></i><i class="ar" style="right:6.6px;top:7.0px"></i></div><div class="t " style="left:1070.4px;top:361px;">X:</div><div class="t r" style="right:308.7px;top:361px;">0.000</div>
<div class="w num " style="left:1050.9px;top:378.3px;width:270.4px;height:23.8px;border-radius:0 0 9px 9px;"><i class="al" style="left:6.6px;top:6.9px"></i><i class="ar" style="right:6.6px;top:6.9px"></i></div><div class="t " style="left:1070.4px;top:385px;">Y:</div><div class="t r" style="right:308.7px;top:385px;">0.000</div>
<div class="w num " style="left:1330.8px;top:355.3px;width:271.4px;height:24.0px;border-radius:9px 9px 0 0;"><i class="al" style="left:6.6px;top:7.0px"></i><i class="ar" style="right:6.6px;top:7.0px"></i></div><div class="t " style="left:1350.3px;top:361px;">Start:</div><div class="t r" style="right:27.8px;top:361px;">0.100</div>
<div class="w num " style="left:1330.8px;top:378.3px;width:271.4px;height:23.8px;border-radius:0 0 9px 9px;"><i class="al" style="left:6.6px;top:6.9px"></i><i class="ar" style="right:6.6px;top:6.9px"></i></div><div class="t " style="left:1350.3px;top:385px;">End:</div><div class="t r" style="right:27.8px;top:385px;">10000.000</div>
<div class="sep" style="left:1047.0px;top:410.6px;width:559.0px"></div>
<i class="tri" style="left:1055.6px;top:420.7px"></i><div class="t h" style="left:1071.4px;top:420px;">Camera</div><svg width="12" height="6" viewBox="0 0 12 6" style="left:1587.5px;top:424.9px"><rect x="0" y="0" width="1.4" height="1.4" fill="#4a4a4a"/><rect x="1.0" y="1.0" width="1" height="1" fill="#8c8c8c"/><rect x="0" y="3" width="1.4" height="1.4" fill="#4a4a4a"/><rect x="1.0" y="4.0" width="1" height="1" fill="#8c8c8c"/><rect x="3" y="0" width="1.4" height="1.4" fill="#4a4a4a"/><rect x="4.0" y="1.0" width="1" height="1" fill="#8c8c8c"/><rect x="3" y="3" width="1.4" height="1.4" fill="#4a4a4a"/><rect x="4.0" y="4.0" width="1" height="1" fill="#8c8c8c"/><rect x="6" y="0" width="1.4" height="1.4" fill="#4a4a4a"/><rect x="7.0" y="1.0" width="1" height="1" fill="#8c8c8c"/><rect x="6" y="3" width="1.4" height="1.4" fill="#4a4a4a"/><rect x="7.0" y="4.0" width="1" height="1" fill="#8c8c8c"/><rect x="9" y="0" width="1.4" height="1.4" fill="#4a4a4a"/><rect x="10.0" y="1.0" width="1" height="1" fill="#8c8c8c"/><rect x="9" y="3" width="1.4" height="1.4" fill="#4a4a4a"/><rect x="10.0" y="4.0" width="1" height="1" fill="#8c8c8c"/></svg>
<div class="w dk" style="left:1050.9px;top:449.0px;width:503.0px;height:24.0px;border-radius:4.5px 0 0 4.5px;"><svg width="8" height="17" viewBox="0 0 8 17" style="left:489.5px;top:3.0px"><path d="M4 0.6 L7.4 7 H0.6 Z M4 16.4 L7.4 10 H0.6 Z" fill="#b8b8b8"/></svg></div><div class="t " style="left:1060.4px;top:456px;color:#fff;">Camera Presets</div>
<div class="w tool" style="left:1552.9px;top:449.0px;width:25.5px;height:24.0px;border-radius:0;"><svg width="15" height="15" viewBox="0 0 16 16" style="left:4.3px;top:3.2px;opacity:1"><path d="M8 2 V14 M2 8 H14" stroke="#222" stroke-width="4.6" stroke-linecap="round"/><path d="M8 2 V14 M2 8 H14" stroke="#f4f4f4" stroke-width="2.5" stroke-linecap="round"/></svg></div>
<div class="w tool" style="left:1577.4px;top:449.0px;width:24.8px;height:24.0px;border-radius:0 4.5px 4.5px 0;"><svg width="15" height="15" viewBox="0 0 16 16" style="left:3.8px;top:3.0px;opacity:1"><path d="M2.5 8 H13.5" stroke="#222" stroke-width="4.6" stroke-linecap="round"/><path d="M2.5 8 H13.5" stroke="#f4f4f4" stroke-width="2.5" stroke-linecap="round"/></svg></div>
<div class="t " style="left:1060.6px;top:485px;">Sensor:</div>
<div class="w num " style="left:1050.9px;top:507.2px;width:270.4px;height:23.5px;border-radius:11.7px;"><i class="al" style="left:6.6px;top:6.8px"></i><i class="ar" style="right:6.6px;top:6.8px"></i></div><div class="t " style="left:1070.4px;top:513px;">Size:</div><div class="t r" style="right:308.7px;top:513px;">32.00</div>
<div class="w dk" style="left:1330.8px;top:507.2px;width:271.4px;height:23.5px;border-radius:4.5px;"><svg width="8" height="17" viewBox="0 0 8 17" style="left:258.0px;top:3.0px"><path d="M4 0.6 L7.4 7 H0.6 Z M4 16.4 L7.4 10 H0.6 Z" fill="#b8b8b8"/></svg></div><div class="t " style="left:1340.3px;top:513px;color:#fff;">Auto</div>
<div class="sep" style="left:1047.0px;top:539.2px;width:559.0px"></div>
<i class="tri" style="left:1055.6px;top:548.6px"></i><div class="t h" style="left:1071.4px;top:548px;">Depth of Field</div><svg width="12" height="6" viewBox="0 0 12 6" style="left:1587.5px;top:552.8px"><rect x="0" y="0" width="1.4" height="1.4" fill="#4a4a4a"/><rect x="1.0" y="1.0" width="1" height="1" fill="#8c8c8c"/><rect x="0" y="3" width="1.4" height="1.4" fill="#4a4a4a"/><rect x="1.0" y="4.0" width="1" height="1" fill="#8c8c8c"/><rect x="3" y="0" width="1.4" height="1.4" fill="#4a4a4a"/><rect x="4.0" y="1.0" width="1" height="1" fill="#8c8c8c"/><rect x="3" y="3" width="1.4" height="1.4" fill="#4a4a4a"/><rect x="4.0" y="4.0" width="1" height="1" fill="#8c8c8c"/><rect x="6" y="0" width="1.4" height="1.4" fill="#4a4a4a"/><rect x="7.0" y="1.0" width="1" height="1" fill="#8c8c8c"/><rect x="6" y="3" width="1.4" height="1.4" fill="#4a4a4a"/><rect x="7.0" y="4.0" width="1" height="1" fill="#8c8c8c"/><rect x="9" y="0" width="1.4" height="1.4" fill="#4a4a4a"/><rect x="10.0" y="1.0" width="1" height="1" fill="#8c8c8c"/><rect x="9" y="3" width="1.4" height="1.4" fill="#4a4a4a"/><rect x="10.0" y="4.0" width="1" height="1" fill="#8c8c8c"/></svg>
<div class="t " style="left:1060.6px;top:583px;">Focus:</div>
<div class="t " style="left:1340.5px;top:583px;">Viewport:</div>
<div class="w txt" style="left:1050.9px;top:603.7px;width:270.4px;height:23.0px;border-radius:4.5px;"><svg width="17" height="17" viewBox="0 0 16 16" style="left:6.0px;top:2.3px;opacity:1"><path d="M8 1.2 L14.3 4 V11.6 L8 14.8 L1.7 11.6 V4 Z" fill="#c98a4a"/><path d="M8 1.2 L14.3 4 L8 6.9 L1.7 4 Z" fill="#fdebd0"/><path d="M1.7 4 L8 6.9 V14.8 L1.7 11.6 Z" fill="#f5a945"/><path d="M8 6.9 L14.3 4 V11.6 L8 14.8 Z" fill="#d98b3a"/><path d="M2.4 4.6 L8 7.4 L13.6 4.6 M8 7.4 V14" fill="none" stroke="#ffe2b8" stroke-width=".7"/><path d="M8 1.2 L14.3 4 V11.6 L8 14.8 L1.7 11.6 V4 Z" fill="none" stroke="#3a2610" stroke-width=".9" stroke-linejoin="round"/></svg><svg width="17" height="17" viewBox="0 0 16 16" style="left:250.0px;top:2.5px;opacity:1"><path d="M2 14 L3 11 L9.2 4.8 L11.2 6.8 L5 13 Z" fill="#d8d8d8" stroke="#222" stroke-width=".9" stroke-linejoin="round"/><path d="M8.3 3.2 L12.8 7.7 M9.6 5.4 L12.4 1.9 C13.4 .9 15.1 2.6 14.1 3.6 L10.6 6.4" fill="#333" stroke="#222" stroke-width="1.5" stroke-linejoin="round" stroke-linecap="round"/></svg></div>
<div class="w num " style="left:1050.9px;top:629.6px;width:270.4px;height:23.0px;border-radius:11.5px;"><i class="al" style="left:6.6px;top:6.5px"></i><i class="ar" style="right:6.6px;top:6.5px"></i></div><div class="t " style="left:1070.4px;top:636px;">Distance:</div><div class="t r" style="right:308.7px;top:636px;">0.00</div>
<div class="cb " style="left:1335.3px;top:605.4px"></div>
<div class="t " style="left:1360.3px;top:608px;">High Quality</div>
<div class="w num " style="left:1330.8px;top:625.3px;width:271.4px;height:23.5px;border-radius:11.7px;"><i class="al" style="left:6.6px;top:6.8px"></i><i class="ar" style="right:6.6px;top:6.8px"></i></div><div class="t " style="left:1350.3px;top:632px;">F-stop:</div><div class="t r" style="right:27.8px;top:632px;">128.0</div>
<div class="sep" style="left:1047.0px;top:661.0px;width:559.0px"></div>
<i class="tri" style="left:1055.6px;top:671.1px"></i><div class="t h" style="left:1071.4px;top:670px;">Display</div><svg width="12" height="6" viewBox="0 0 12 6" style="left:1587.5px;top:675.3px"><rect x="0" y="0" width="1.4" height="1.4" fill="#4a4a4a"/><rect x="1.0" y="1.0" width="1" height="1" fill="#8c8c8c"/><rect x="0" y="3" width="1.4" height="1.4" fill="#4a4a4a"/><rect x="1.0" y="4.0" width="1" height="1" fill="#8c8c8c"/><rect x="3" y="0" width="1.4" height="1.4" fill="#4a4a4a"/><rect x="4.0" y="1.0" width="1" height="1" fill="#8c8c8c"/><rect x="3" y="3" width="1.4" height="1.4" fill="#4a4a4a"/><rect x="4.0" y="4.0" width="1" height="1" fill="#8c8c8c"/><rect x="6" y="0" width="1.4" height="1.4" fill="#4a4a4a"/><rect x="7.0" y="1.0" width="1" height="1" fill="#8c8c8c"/><rect x="6" y="3" width="1.4" height="1.4" fill="#4a4a4a"/><rect x="7.0" y="4.0" width="1" height="1" fill="#8c8c8c"/><rect x="9" y="0" width="1.4" height="1.4" fill="#4a4a4a"/><rect x="10.0" y="1.0" width="1" height="1" fill="#8c8c8c"/><rect x="9" y="3" width="1.4" height="1.4" fill="#4a4a4a"/><rect x="10.0" y="4.0" width="1" height="1" fill="#8c8c8c"/></svg>
<div class="cb " style="left:1055.0px;top:703.7px"></div>
<div class="t " style="left:1080.4px;top:706px;">Limits</div>
<div class="cb " style="left:1055.0px;top:729.6px"></div>
<div class="t " style="left:1080.4px;top:732px;">Mist</div>
<div class="cb " style="left:1055.0px;top:755.6px"></div>
<div class="t " style="left:1080.4px;top:758px;">Sensor</div>
<div class="cb " style="left:1055.0px;top:781.5px"></div>
<div class="t " style="left:1080.4px;top:784px;">Name</div>
<div class="w dk" style="left:1330.8px;top:699.2px;width:271.4px;height:23.5px;border-radius:4.5px;"><svg width="8" height="17" viewBox="0 0 8 17" style="left:258.0px;top:3.0px"><path d="M4 0.6 L7.4 7 H0.6 Z M4 16.4 L7.4 10 H0.6 Z" fill="#b8b8b8"/></svg></div><div class="t " style="left:1340.3px;top:705px;color:#fff;">Composition Guides</div>
<div class="w num " style="left:1330.8px;top:734.4px;width:271.4px;height:23.4px;border-radius:11.7px;"><i class="al" style="left:6.6px;top:6.7px"></i><i class="ar" style="right:6.6px;top:6.7px"></i></div><div class="t " style="left:1350.3px;top:741px;">Size:</div><div class="t r" style="right:27.8px;top:741px;">100.00</div>
<div class="cb " style="left:1335.3px;top:773.8px"><svg width="18" height="18" viewBox="0 0 18 18" style="left:-1px;top:-4px"><path d="M4.6 9.4 L7.3 13 L14 3.8" fill="none" stroke="#1a1a1a" stroke-width="3" stroke-linecap="round" stroke-linejoin="round"/><path d="M4.6 9.4 L7.3 13 L14 3.8" fill="none" stroke="#ececec" stroke-width="1.5" stroke-linecap="round" stroke-linejoin="round"/></svg></div>
<div class="t " style="left:1360.3px;top:776px;color:#fff">Passepartout</div>
<svg width="1610" height="794" viewBox="0 0 1610 794" style="left:0;top:0;pointer-events:none">
<g fill="none" stroke="#f1ec08" stroke-linecap="round" stroke-linejoin="round">
<path d="M593.7 267.4 L704.5 235.4" stroke-width="21.8"/>
</g>
<path fill="#f1ec08" d="M1214.5 124.5 A10.05 10.05 0 0 1 1234.6 124.5 L1234.6 171.3 L1266.9 171.5 L1266.9 118.1 A10.55 10.55 0 0 1 1288 118.1 L1288 174.6 L1322 174.4 C1326 169 1338 168 1342.5 174 C1347 180 1346.5 187 1342 191.5 C1338 195.5 1332 196 1326 195.6 L1290 195.6 C1287 199.5 1281 200.8 1277.4 200.6 C1273 200.6 1269 198.5 1266.5 195.6 L1240 195 C1232 194.6 1224 192.5 1218.5 189.5 C1214 187 1212 183 1212.2 178 L1212.2 168 C1212.4 164 1213.5 161 1214.5 159 Z"/>
<path fill="#f1ec08" d="M1610 300.6 L1597.6 308.9 L1581 314 L1560 318.2 L1450 319.2 L1340 319.4 C1328 319.6 1317 322 1315 332.8 L1311.8 368.1 L1309.7 401.4 L1306.8 420.1 C1305.8 430 1308 438.5 1317 439.8 L1406.4 439.8 L1456.2 434.6 L1518.6 431.5 L1589.2 427.3 L1610 424.2 L1610 405.5 L1580.9 408.6 L1518.6 409.7 L1456.2 412.8 L1404.3 418 L1329.5 418 L1330.5 393 L1332.6 368.1 L1334.7 340 L1340 338.6 L1560 338.6 L1581 334.9 L1601.7 329.7 L1610 326.6 Z"/>
</svg>
</body></html>
